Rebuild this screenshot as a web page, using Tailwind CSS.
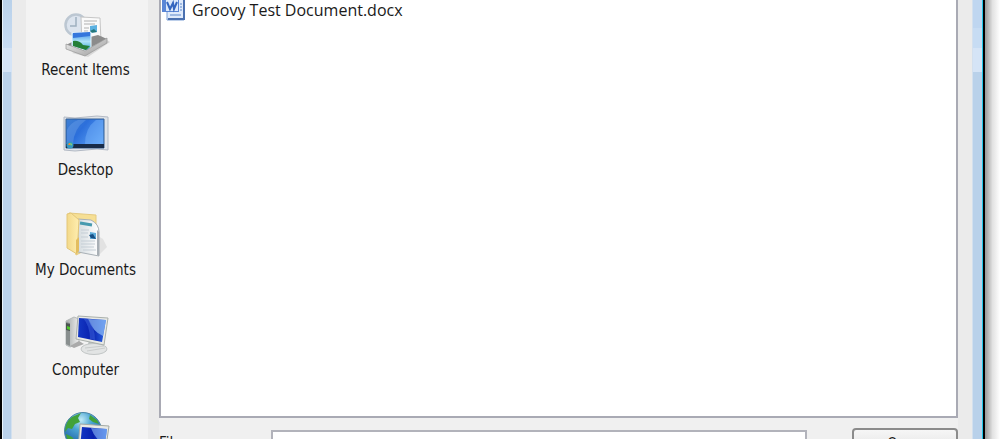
<!DOCTYPE html>
<html lang="en">
<head>
    <meta charset="UTF-8">
    <meta name="viewport" content="width=device-width, initial-scale=1.0">
    <title>Open</title>
    <script src="https://cdn.jsdelivr.net/npm/@tailwindcss/browser@4"></script>
</head>
<body class="h-screen overflow-hidden bg-white text-[#1a1a1a]">
    <div class="flex h-full">
        <!-- Left window border -->
        <div class="flex w-3 shrink-0 flex-col border-l-2 border-black bg-[#b9d1ea]">
            <div class="h-12 border-l border-[#e8f3fb] bg-linear-to-b from-[#b9d1ea] to-[#c7dcf3]"></div>
            <div class="h-6 border-l border-[#e8f3fb] bg-[#d5e4f6]"></div>
            <div class="flex-1 border-l border-r border-l-[#e8f3fb] border-r-[#d3e0ee]"></div>
        </div>

        <div class="flex flex-1 min-w-0 bg-[#ebebeb] pl-[14px] pr-[14px]">
            <!-- Places bar -->
            <nav class="flex w-[122px] shrink-0 flex-col gap-7 bg-[#f3f3f3] pt-[10px] pr-[3px] text-[15px] leading-6 font-['Tahoma','DejaVu_Sans_Condensed',sans-serif]">
                <a href="#" class="flex shrink-0 flex-col items-center whitespace-nowrap">
                    <svg class="size-12" viewBox="0 0 48 48">
                        <defs>
                            <linearGradient id="tray" x1="0" y1="0" x2="1" y2="1"><stop offset="0" stop-color="#f2f2f2"/><stop offset="1" stop-color="#999"/></linearGradient>
                            <linearGradient id="photo" x1="0" y1="0" x2="0" y2="1"><stop offset="0" stop-color="#3c8be6"/><stop offset=".5" stop-color="#aee2f8"/><stop offset="1" stop-color="#28a0cf"/></linearGradient>
                        </defs>
                        <path d="M10 43l29-17 9 6-22 15z" fill="#d8d8d8"/>
                        <circle cx="14" cy="15" r="10.500" fill="#dce4ee" stroke="#bcc7d2" stroke-width="2.500"/>
                        <path d="M14 7v9h-6" fill="none" stroke="#9fb0c0" stroke-width="1.500"/>
                        <path d="M19 7l19 1 1 24-19 3z" fill="#fafafa" stroke="#c6c6c6"/>
                        <path d="M22 11h13M22 14h11M22 18h5M22 21h4" stroke="#c9c9c9" stroke-width="1.500"/>
                        <path d="M28 16l7-1v7l-7 1z" fill="#5bb0e0"/><path d="M28 21l4-2 3 3-7 1z" fill="#24777a"/>
                        <path d="M4 35l8-4 24-6 9 4-22 11z" fill="#8b8b8b"/>
                        <path d="M10 23l19-1v15l-4 4-15-5z" fill="url(#photo)" stroke="#eaf7ff"/>
                        <path d="M11 23l17-1v4l-17 2z" fill="#3576dc"/>
                        <path d="M11 31q6-1 10 4l7 1-4 4-13-4z" fill="#257f37"/>
                        <path d="M4 34l19 7 22-13v5L23 46 4 39z" fill="url(#tray)" stroke="#979797" stroke-width=".7"/>
                    </svg>
                    <span>Recent Items</span>
                </a>
                <a href="#" class="flex shrink-0 flex-col items-center whitespace-nowrap">
                    <svg class="size-12" viewBox="0 0 48 48">
                        <defs>
                            <linearGradient id="desk" x1="0" y1="0" x2="1" y2=".6"><stop offset="0" stop-color="#3f80d2"/><stop offset=".45" stop-color="#2c6fdb"/><stop offset="1" stop-color="#5ba0f4"/></linearGradient>
                        </defs>
                        <path d="M2 7q11 2 22 0t22 0v33q-11-2-22 0T2 40z" fill="#dfe3e8" stroke="#b3bac5"/>
                        <path d="M4 9h38v29H4z" fill="url(#desk)" stroke="#376093"/>
                        <path d="M5 34V20Q8 13 16 10h8Q12 18 11 34z" fill="#6399e3" opacity=".5"/>
                        <path d="M23 34Q23 18 34 10h7v24z" fill="#78b4fa" opacity=".45"/>
                        <path d="M4 34h38v4H4z" fill="#182c49"/>
                        <circle cx="8" cy="35" r="3.500" fill="#359ac1"/><path d="M6 35h2v-2H7z" fill="#ef8b32"/><path d="M8 33l2 1-1 2z" fill="#a2db57"/>
                    </svg>
                    <span>Desktop</span>
                </a>
                <a href="#" class="flex shrink-0 flex-col items-center whitespace-nowrap">
                    <svg class="size-12" viewBox="0 0 48 48">
                        <defs>
                            <linearGradient id="folder"><stop offset="0" stop-color="#f3d98a"/><stop offset="1" stop-color="#ffeeb0"/></linearGradient>
                            <linearGradient id="paper"><stop offset="0" stop-color="#d5dce0"/><stop offset="1" stop-color="#fff"/></linearGradient>
                        </defs>
                        <path d="M36 46l9-9-4-8-5-3z" fill="#e2e2e2"/>
                        <path d="M7 3l27 2v30L14 45z" fill="#f6df94" stroke="#e5ca80"/>
                        <path d="M16 9l13 1q8 4 8 12v24l-21-4z" fill="url(#paper)" stroke="#a8b0b6"/>
                        <path d="M18 13l12 2" stroke="#469aaf" stroke-width="3"/>
                        <path d="M19 20h8M19 23h7M19 27h7M19 31h14M19 34h14M19 37h13M21 40h13" stroke="#c5ced5"/>
                        <path d="M28 22l6 1v6h-6z" fill="#5faedb"/><path d="M27 25l4-1 3 5-5-1z" fill="#174f84"/>
                        <path d="M35 20l2 2v24l-2-1z" fill="#a8afb5"/>
                        <path d="M5 4l4-1 8 7-2 34-10-6z" fill="url(#folder)" stroke="#e3c678"/>
                        <path d="M14 30l3-3v14l-3 3z" fill="#e3bd60"/>
                    </svg>
                    <span>My Documents</span>
                </a>
                <a href="#" class="flex shrink-0 flex-col items-center whitespace-nowrap">
                    <svg class="size-12" viewBox="0 0 48 48">
                        <defs>
                            <linearGradient id="screen" x1="0" y1="0" x2="1" y2="0"><stop offset="0" stop-color="#1438c4"/><stop offset=".5" stop-color="#0820ae"/><stop offset="1" stop-color="#2b67e4"/></linearGradient>
                            <linearGradient id="tower"><stop offset="0" stop-color="#a5aaaa"/><stop offset="1" stop-color="#eee"/></linearGradient>
                        </defs>
                        <path d="M4 11l8-4 5 2v25l-9 3-4-2z" fill="url(#tower)" stroke="#b5baba"/>
                        <path d="M4 12l4 1v23l-4-2z" fill="#888e8e"/><path d="M4 13l4 1v7l-4-1z" fill="#4b5451"/><path d="M5 16l3 1v3l-3-1z" fill="#50c82d"/>
                        <path d="M8 36l9-5 5 3-10 4z" fill="#aaa"/>
                        <path d="M27 31l10 2 1 5-13-1z" fill="#b8bebe"/>
                        <ellipse cx="32" cy="39" rx="13" ry="5.500" fill="#e2e4e4" stroke="#c2c6c6"/>
                        <path d="M23 38l19-2M25 41l18-3" stroke="#c9cccc"/>
                        <path d="M16 6l30 2-4 27-28-6z" fill="#e8e9e5" stroke="#aab0ac"/>
                        <path d="M17 8l27 2-4 22-24-5z" fill="url(#screen)"/>
                        <path d="M26 9l18 1-3 16q-10-4-15-17z" fill="#90bdf6" opacity=".7"/>
                        <path d="M21 8q7 8 7 21l5 1Q33 17 26 9z" fill="#3f68de" opacity=".5"/>
                    </svg>
                    <span>Computer</span>
                </a>
                <a href="#" class="flex shrink-0 flex-col items-center whitespace-nowrap">
                    <svg class="size-12" viewBox="0 0 48 48">
                        <defs>
                            <radialGradient id="globe" cx=".45" cy=".2" r=".8"><stop offset="0" stop-color="#c1ebf6"/><stop offset=".35" stop-color="#4ba5d3"/><stop offset="1" stop-color="#164f9b"/></radialGradient>
                        </defs>
                        <circle cx="21" cy="21" r="18.500" fill="url(#globe)" stroke="#4a84a5"/>
                        <path d="M10 7l9-4-3 5 2 4-5 2-3 5-4-1-3 4q0-10 7-15zM28 5l7 5 2 4-6-2-4-3zM4 24l6 3 4 5-2 5Q5 32 4 24z" fill="#42a239"/>
                        <path d="M18 14l29 2-4 28-27-4z" fill="#e8e9e5" stroke="#a2a9a4"/>
                        <path d="M20 17l25 2-3 23-24-4z" fill="url(#screen)"/>
                        <path d="M29 18l16 1-2 15q-10-4-14-16z" fill="#90bdf6" opacity=".6"/>
                    </svg>
                    <span>Network</span>
                </a>
            </nav>

            <!-- File list and fields -->
            <main class="flex flex-1 min-w-0 flex-col pl-[11px] font-['Segoe_UI','Open_Sans',sans-serif]">
                <div class="min-h-0 flex-1 border-2 border-t-0 border-[#a9aab4] bg-white">
                    <div class="flex h-6 items-center gap-[6px] pl-px text-base whitespace-nowrap">
                        <svg class="w-6 h-6 shrink-0" viewBox="0 0 24 24">
                            <path d="M6-2h16v22H5V7z" fill="#dfeafb" stroke="#7d9fd6"/>
                            <path d="M21 0h2v20H6v-2h15z" fill="#4a70b0"/>
                            <path d="M18 4h2M18 7h2M18 10h2M8 15h11" stroke="#88a9dc" stroke-width="1.500"/>
                            <path d="M0 0h17v12H0z" fill="#5a86d6"/>
                            <path d="M4 0h12v11H4z" fill="#dce8fa"/>
                            <path d="M5 2l3 7 3-6 1 6 3-7" fill="none" stroke="#3566bf" stroke-width="2"/>
                        </svg>
                        <span class="-mt-1">Groovy Test Document.docx</span>
                    </div>
                </div>
                <div class="flex h-[21px] shrink-0 overflow-hidden bg-[#f0f0f0] pt-[10px] text-[15px]">
                    <label for="fileName" class="w-28 shrink-0 pt-[5px] leading-5 font-['Tahoma','DejaVu_Sans_Condensed',sans-serif]">File name:</label>
                    <input id="fileName" type="text" class="mt-[2px] h-7 min-w-0 flex-1 border-2 border-[#b2b3bb] bg-white px-2">
                    <button class="ml-[45px] h-8 w-[106px] shrink-0 rounded border-2 border-[#8b8b8b] bg-linear-to-b from-[#f6f6f6] to-[#dedede] text-center leading-6 font-['Tahoma','DejaVu_Sans_Condensed',sans-serif]">Open</button>
                </div>
            </main>
        </div>

        <!-- Right window border with its shadow -->
        <div class="flex w-7 shrink-0">
            <div class="flex w-[10px] flex-col border-l border-[#d3e0ee] bg-[#b9d1ea]">
                <div class="h-7 bg-[#bfd6f0]"></div>
                <div class="h-5 bg-[#c7dcf3]"></div>
                <div class="h-6 bg-[#d5e4f6]"></div>
            </div>
            <div class="w-px bg-[#20c6e8]"></div>
            <div class="w-[2px] bg-black"></div>
            <div class="flex-1 bg-linear-to-r from-[#999] via-[#e2e2e2] to-white"></div>
        </div>
    </div>
</body>
</html>
